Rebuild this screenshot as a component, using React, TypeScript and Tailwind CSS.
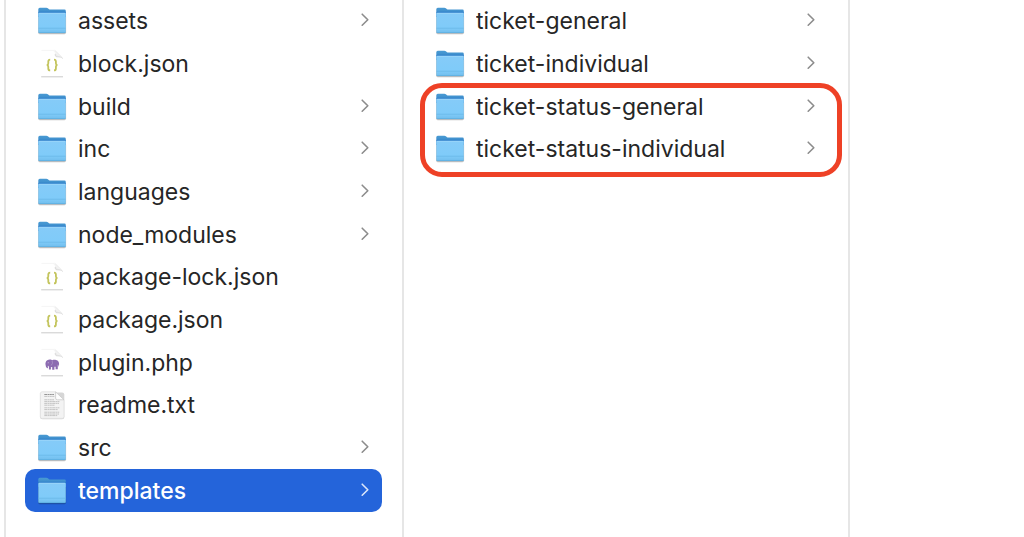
type Kind = "folder" | "json" | "php" | "txt";
type Entry = { name: string; kind: Kind; selected?: boolean };

const pluginFiles: Entry[] = [
  { name: "assets", kind: "folder" },
  { name: "block.json", kind: "json" },
  { name: "build", kind: "folder" },
  { name: "inc", kind: "folder" },
  { name: "languages", kind: "folder" },
  { name: "node_modules", kind: "folder" },
  { name: "package-lock.json", kind: "json" },
  { name: "package.json", kind: "json" },
  { name: "plugin.php", kind: "php" },
  { name: "readme.txt", kind: "txt" },
  { name: "src", kind: "folder" },
  { name: "templates", kind: "folder", selected: true },
];

const templateFolders: Entry[] = [
  { name: "ticket-general", kind: "folder" },
  { name: "ticket-individual", kind: "folder" },
  { name: "ticket-status-general", kind: "folder" },
  { name: "ticket-status-individual", kind: "folder" },
];

function SharedGradients() {
  return (
    <svg className="absolute size-0" aria-hidden="true">
      <defs>
        <linearGradient id="folder-front" x1="0" y1="0" x2="0" y2="1">
          <stop offset="0" stopColor="#85cbf8" />
          <stop offset="0.75" stopColor="#7fcbf9" />
          <stop offset="1" stopColor="#71bdec" />
        </linearGradient>
        <linearGradient id="folder-back" x1="0" y1="0" x2="0" y2="1">
          <stop offset="0" stopColor="#4a9bd3" />
          <stop offset="1" stopColor="#2f7fc6" />
        </linearGradient>
        <linearGradient id="page-fold" x1="0" y1="1" x2="1" y2="0">
          <stop offset="0" stopColor="#cfcfcf" />
          <stop offset="0.5" stopColor="#f4f4f4" />
          <stop offset="1" stopColor="#ffffff" />
        </linearGradient>
      </defs>
    </svg>
  );
}

function FolderIcon() {
  return (
    <svg viewBox="0 0 28 28" className="size-7 shrink-0 overflow-visible" aria-hidden="true">
      <rect x="0" y="8" width="28.2" height="19.4" rx="1.8" fill="#000" opacity="0.12" />
      <rect x="0.2" y="8" width="27.8" height="18.7" rx="1.6" fill="#000" opacity="0.2" />
      <path
        d="M0.3 2.2Q0.3 0.7 1.8 0.7H8.4Q9.2 0.7 9.9 1.3L11 2.2Q11.5 2.6 12.3 2.6H26.5Q27.8 2.6 27.8 4V10H0.3Z"
        fill="url(#folder-back)"
      />
      <path d="M0.6 5.4H27.5" stroke="#2273c3" strokeWidth="1" />
      <path
        d="M0.3 7Q0.3 5.8 1.5 5.8H26.6Q27.8 5.8 27.8 7V24.7Q27.8 26 26.5 26H1.6Q0.3 26 0.3 24.7Z"
        fill="url(#folder-front)"
      />
      <path d="M0.9 6.3H27.2" stroke="#a4daf9" strokeWidth="0.7" />
      <path d="M0.5 21.2H27.6" stroke="#65b5e5" strokeWidth="0.7" />
      <path d="M0.7 25.6H27.4" stroke="#5caee0" strokeWidth="0.8" />
    </svg>
  );
}

function Page() {
  return (
    <>
      <path d="M3.2 0.4H17.4L24.8 7.8V26H3.2Z" fill="#fff" />
      <path d="M3.4 0.4H16.8L20.5 3.2" stroke="#f0f0f0" strokeWidth="0.7" fill="none" />
      <path
        d="M14.8 0.7C17 1.5 17.3 3.3 17.3 4.9C17.3 6.3 18 6.7 19.2 6.7C21.4 6.7 23.4 6.9 24.8 8.5C23 5.3 20 2.3 16.4 0.5Z"
        fill="url(#page-fold)"
      />
      <path d="M17.2 4.1C17.2 6.3 18 6.8 19.4 6.8C21.6 6.8 23.4 7 24.7 8.5" fill="none" stroke="#d2d2d2" strokeWidth="0.8" />
      <path d="M17 0.7L24.6 7.9" stroke="#e6e6e6" strokeWidth="0.7" />
      <path d="M3.2 26.8H25" stroke="#cacaca" strokeWidth="1" />
    </>
  );
}

function JsonIcon() {
  return (
    <svg viewBox="0 0 28 28" className="size-7 shrink-0 overflow-visible" aria-hidden="true">
      <Page />
      <path
        d="M12.2 9.6C10.5 9.6 10.3 10.2 10.3 11.6V13.2C10.3 14.4 9.8 14.9 8.8 15C9.8 15.1 10.3 15.6 10.3 16.8V18.4C10.3 19.8 10.5 20.4 12.2 20.4M16 9.6C17.7 9.6 17.9 10.2 17.9 11.6V13.2C17.9 14.4 18.4 14.9 19.4 15C18.4 15.1 17.9 15.6 17.9 16.8V18.4C17.9 19.8 17.7 20.4 16 20.4"
        fill="none"
        stroke="#c3c45c"
        strokeWidth="1.8"
      />
    </svg>
  );
}

function PhpIcon() {
  return (
    <svg viewBox="0 0 28 28" className="size-7 shrink-0 overflow-visible" aria-hidden="true">
      <Page />
      <path
        d="M7.7 13.2C8.2 11.4 10 10.6 11.8 10.6C13 10.6 13.7 11 14.3 11.3C15.4 10.7 16.8 10.7 18.1 11.1C20.2 11.7 21.2 13.2 21.1 15.2C21.1 16.4 20.8 17.2 20.3 17.9V15.8H19.8V20.3H17.6V17.8H16.4V20.8H14.2V18.1C13.7 18.2 13.3 18.2 12.9 18V20.6H10.9V17.6C10.5 17.3 10.2 16.9 10 16.4C9.7 17.2 9.7 18.2 10 19.2C8.4 18.9 7.8 17.8 7.7 16.4C7.3 15.4 7.3 14.2 7.7 13.2Z"
        fill="#8c6bb1"
      />
      <path d="M14 11.8C14.8 13.4 14.6 15.6 12.8 16.4" fill="none" stroke="#b9a4d0" strokeWidth="0.6" />
      <circle cx="10.2" cy="13.7" r="0.5" fill="#d5c8e3" />
    </svg>
  );
}

function TextIcon() {
  return (
    <svg viewBox="0 0 28 28" className="size-7 shrink-0 overflow-visible" aria-hidden="true">
      <rect x="2.1" y="1.4" width="24.2" height="26.9" rx="2.2" fill="#000" opacity="0.16" />
      <path
        d="M2.3 2.6Q2.3 0.8 4.1 0.8H17.6L26 8.8V25.6Q26 27.4 24.2 27.4H4.1Q2.3 27.4 2.3 25.6Z"
        fill="#f3f3f3"
        stroke="#dedede"
        strokeWidth="0.7"
      />
      <path d="M17.6 0.9V7Q17.6 8.8 19.4 8.8H26Z" fill="#fdfdfd" stroke="#c4c4c4" strokeWidth="0.7" />
      <g stroke="#bdbdbd" strokeWidth="0.9" strokeDasharray="3 0.4 1.6 0.3 2.2 0.4">
        <path d="M6.3 3.5H16" stroke="#8a8a8a" />
        <path d="M6.3 5.4H16.4" />
        <path d="M6.3 8.8H16" />
        <path d="M6.3 10.6H21.4" />
        <path d="M6.3 12.4H21" />
        <path d="M6.3 14.2H16.5" />
        <path d="M6.3 16.8H21.4" />
        <path d="M6.3 18.6H20" />
        <path d="M6.3 21.2H21.2" />
        <path d="M6.3 23H21" />
        <path d="M6.3 24.6H19.5" />
      </g>
    </svg>
  );
}

const icons = { folder: FolderIcon, json: JsonIcon, php: PhpIcon, txt: TextIcon };

function Row({ entry }: { entry: Entry }) {
  const Icon = icons[entry.kind];
  return (
    <li className="grid">
      <a
        href={"#" + entry.name}
        aria-current={entry.selected ? "true" : undefined}
        className={
          entry.selected
            ? "flex items-center gap-3 rounded-[10px] bg-[#2464da] px-[13px] font-medium text-white"
            : "flex items-center gap-3 rounded-[10px] px-[13px] text-[#262626]"
        }
      >
        <Icon />
        <span className="min-w-0 flex-1 truncate">{entry.name}</span>
        {entry.kind === "folder" && (
          <svg
            viewBox="0 0 8 14"
            className={entry.selected ? "mb-0.5 h-3.5 w-2 text-[#dbe6fa]" : "mb-0.5 h-3.5 w-2 text-[#8c8c8c]"}
            aria-hidden="true"
          >
            <path
              d="M1.2 1.2L6.8 6.7L1.2 12.2"
              fill="none"
              stroke="currentColor"
              strokeWidth="1.6"
              strokeLinecap="round"
              strokeLinejoin="round"
            />
          </svg>
        )}
      </a>
    </li>
  );
}

function Column({ label, entries }: { label: string; entries: Entry[] }) {
  return (
    <nav aria-label={label} className="min-w-0 border-l-2 border-[#e6e6e6] pr-5 pl-[19px]">
      <ul className="grid h-128 grid-rows-12">
        {entries.map((entry) => (
          <Row key={entry.name} entry={entry} />
        ))}
      </ul>
    </nav>
  );
}

export default function App() {
  return (
    <main className="relative grid min-h-screen grid-cols-[398fr_446fr_176fr] bg-white pl-1 font-['Inter','Liberation_Sans',sans-serif] text-[23px] leading-7 font-[420]">
      <SharedGradients />
      <Column label="Plugin files" entries={pluginFiles} />
      <div className="relative grid">
        <Column label="Templates" entries={templateFolders} />
        <div className="pointer-events-none absolute top-[83px] right-1.5 left-[18px] h-[94px] rounded-[22px] border-5 border-[#ee4126]" />
      </div>
      <div className="border-l-2 border-[#e6e6e6]" />
    </main>
  );
}
